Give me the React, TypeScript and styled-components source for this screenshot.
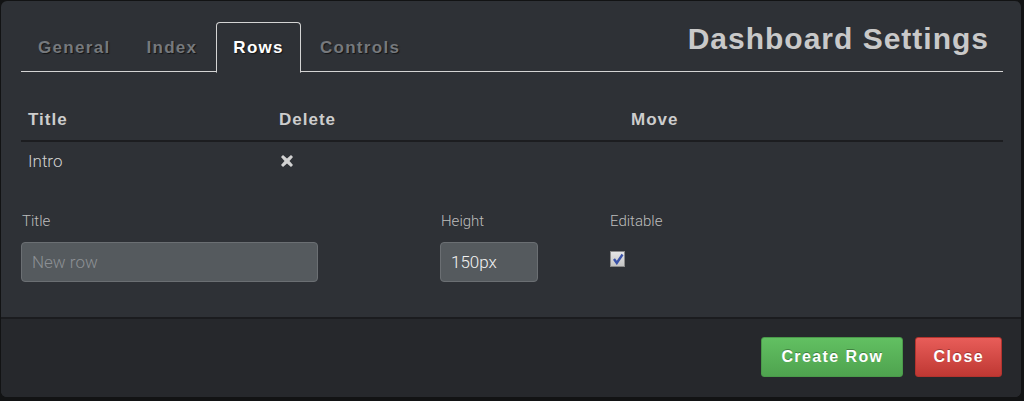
import React from 'react';
import styled, { createGlobalStyle } from 'styled-components';

const GlobalStyle = createGlobalStyle`
  html, body {
    margin: 0;
    padding: 0;
    background: #121314;
  }
  * {
    box-sizing: border-box;
  }
`;

const Page = styled.div`
  width: 1024px;
  height: 401px;
  padding: 1px 0 0 1px;
`;

const Modal = styled.div`
  width: 1020px;
  height: 396px;
  border-radius: 6px;
  overflow: hidden;
  display: flex;
  flex-direction: column;
  background: #2e3136;
  font-family: 'Liberation Sans', Arial, sans-serif;
`;

const Body = styled.div`
  flex: 1;
  padding: 20px 18px 0 20px;
`;

const Header = styled.div`
  display: flex;
  justify-content: space-between;
  align-items: flex-start;
  border-bottom: 1px solid #d4d4d4;
  height: 51px;
`;

const Tabs = styled.ul`
  display: flex;
  list-style: none;
  margin: 0;
  padding: 0;
  gap: 2px;
`;

const Tab = styled.li<{ $active?: boolean }>`
  height: 51px;
  margin-top: 1px;
  padding: 0 16px;
  display: flex;
  align-items: center;
  font-size: 17px;
  font-weight: bold;
  letter-spacing: 1.3px;
  color: ${({ $active }) => ($active ? '#ffffff' : '#76797d')};
  text-shadow: 1px 1px 1px rgba(0, 0, 0, 0.6);
  border: 1px solid ${({ $active }) => ($active ? '#d4d4d4' : 'transparent')};
  border-bottom-color: ${({ $active }) => ($active ? '#2e3136' : 'transparent')};
  border-radius: 4px 4px 0 0;
  background: ${({ $active }) => ($active ? '#2e3136' : 'transparent')};
`;

const DialogTitle = styled.h3`
  margin: 3px 14px 0 0;
  font-size: 30px;
  line-height: 30px;
  font-weight: bold;
  letter-spacing: 1px;
  color: #c9c9c9;
`;

const Table = styled.div`
  margin-top: 30px;
  display: grid;
  grid-template-columns: 251px 352px 1fr;
`;

const HeadCell = styled.div`
  height: 40px;
  padding: 0 7px 2px;
  display: flex;
  align-items: center;
  border-bottom: 2px solid #1c1d20;
  font-size: 17px;
  font-weight: bold;
  letter-spacing: 1px;
  color: #cdcdcd;
`;

const Cell = styled.div`
  height: 38px;
  padding: 0 7px;
  display: flex;
  align-items: center;
  font-family: Roboto, 'Liberation Sans', sans-serif;
  font-weight: 300;
  font-size: 17px;
  color: #d0d0d0;
`;

const Form = styled.div`
  margin-top: 32px;
  display: grid;
  grid-template-columns: 419px 169px 1fr;
`;

const Field = styled.div`
  display: flex;
  flex-direction: column;
  gap: 12px;
`;

const Label = styled.label`
  height: 18px;
  line-height: 18px;
  padding-left: 1px;
  font-family: Roboto, 'Liberation Sans', sans-serif;
  font-weight: 300;
  font-size: 15px;
  color: #bdbdbd;
`;

const Input = styled.input<{ $width: number }>`
  width: ${({ $width }) => $width}px;
  height: 40px;
  padding: 0 10px;
  border: 1px solid #6b6f73;
  border-radius: 4px;
  background: #555a5e;
  color: #f2f2f2;
  font-family: Roboto, 'Liberation Sans', sans-serif;
  font-weight: 300;
  font-size: 17px;
  outline: none;

  &::placeholder {
    color: #8c9094;
  }
`;

const CheckBox = styled.span`
  margin: 9px 0 0 1px;
  width: 15px;
  height: 16px;
  display: flex;
  align-items: center;
  justify-content: center;
  background: linear-gradient(#e6e6e6, #c4c4c4);
  border: 1px solid #8a8a8a;
`;

const Footer = styled.div`
  height: 80px;
  border-top: 2px solid #1b1c1f;
  background: #26282c;
  display: flex;
  justify-content: flex-end;
  align-items: flex-start;
  gap: 12px;
  padding: 18px 19px 0 0;
`;

const Button = styled.button<{ $variant: 'success' | 'danger' }>`
  height: 40px;
  padding: 0 ${({ $variant }) => ($variant === 'success' ? 19 : 17)}px;
  border: 1px solid ${({ $variant }) => ($variant === 'success' ? '#4a9a4a' : '#b3332e')};
  border-radius: 3px;
  background: ${({ $variant }) =>
    $variant === 'success'
      ? 'linear-gradient(#62c062, #4fa34f)'
      : 'linear-gradient(#e85d59, #bf3833)'};
  color: #ffffff;
  font-family: 'Liberation Sans', Arial, sans-serif;
  font-size: 16px;
  font-weight: bold;
  letter-spacing: 1.4px;
  text-shadow: 0 -1px 0 rgba(0, 0, 0, 0.3);
  cursor: pointer;
`;

const DeleteIcon = () => (
  <svg width="12" height="12" viewBox="0 0 12 12" style={{ marginLeft: 2 }}>
    <path
      d="M2 0 L6 3.5 L10 0 L12 2 L8.5 6 L12 10 L10 12 L6 8.5 L2 12 L0 10 L3.5 6 L0 2 Z"
      fill="#d2d2d2"
    />
  </svg>
);

const CheckMark = () => (
  <svg width="12" height="12" viewBox="0 0 12 12">
    <path d="M2 6 L4.8 10 L10.5 1.5" stroke="#3a52a8" strokeWidth="2.4" fill="none" />
  </svg>
);

const tabs = ['General', 'Index', 'Rows', 'Controls'];

export default function App() {
  return (
    <Page>
      <GlobalStyle />
      <Modal>
        <Body>
          <Header>
            <Tabs>
              {tabs.map((t) => (
                <Tab key={t} $active={t === 'Rows'}>
                  {t}
                </Tab>
              ))}
            </Tabs>
            <DialogTitle>Dashboard Settings</DialogTitle>
          </Header>

          <Table>
            <HeadCell>Title</HeadCell>
            <HeadCell>Delete</HeadCell>
            <HeadCell>Move</HeadCell>
            <Cell>Intro</Cell>
            <Cell>
              <DeleteIcon />
            </Cell>
            <Cell />
          </Table>

          <Form>
            <Field>
              <Label>Title</Label>
              <Input $width={297} placeholder="New row" />
            </Field>
            <Field>
              <Label>Height</Label>
              <Input $width={98} defaultValue="150px" />
            </Field>
            <Field>
              <Label>Editable</Label>
              <CheckBox>
                <CheckMark />
              </CheckBox>
            </Field>
          </Form>
        </Body>

        <Footer>
          <Button $variant="success">Create Row</Button>
          <Button $variant="danger">Close</Button>
        </Footer>
      </Modal>
    </Page>
  );
}
